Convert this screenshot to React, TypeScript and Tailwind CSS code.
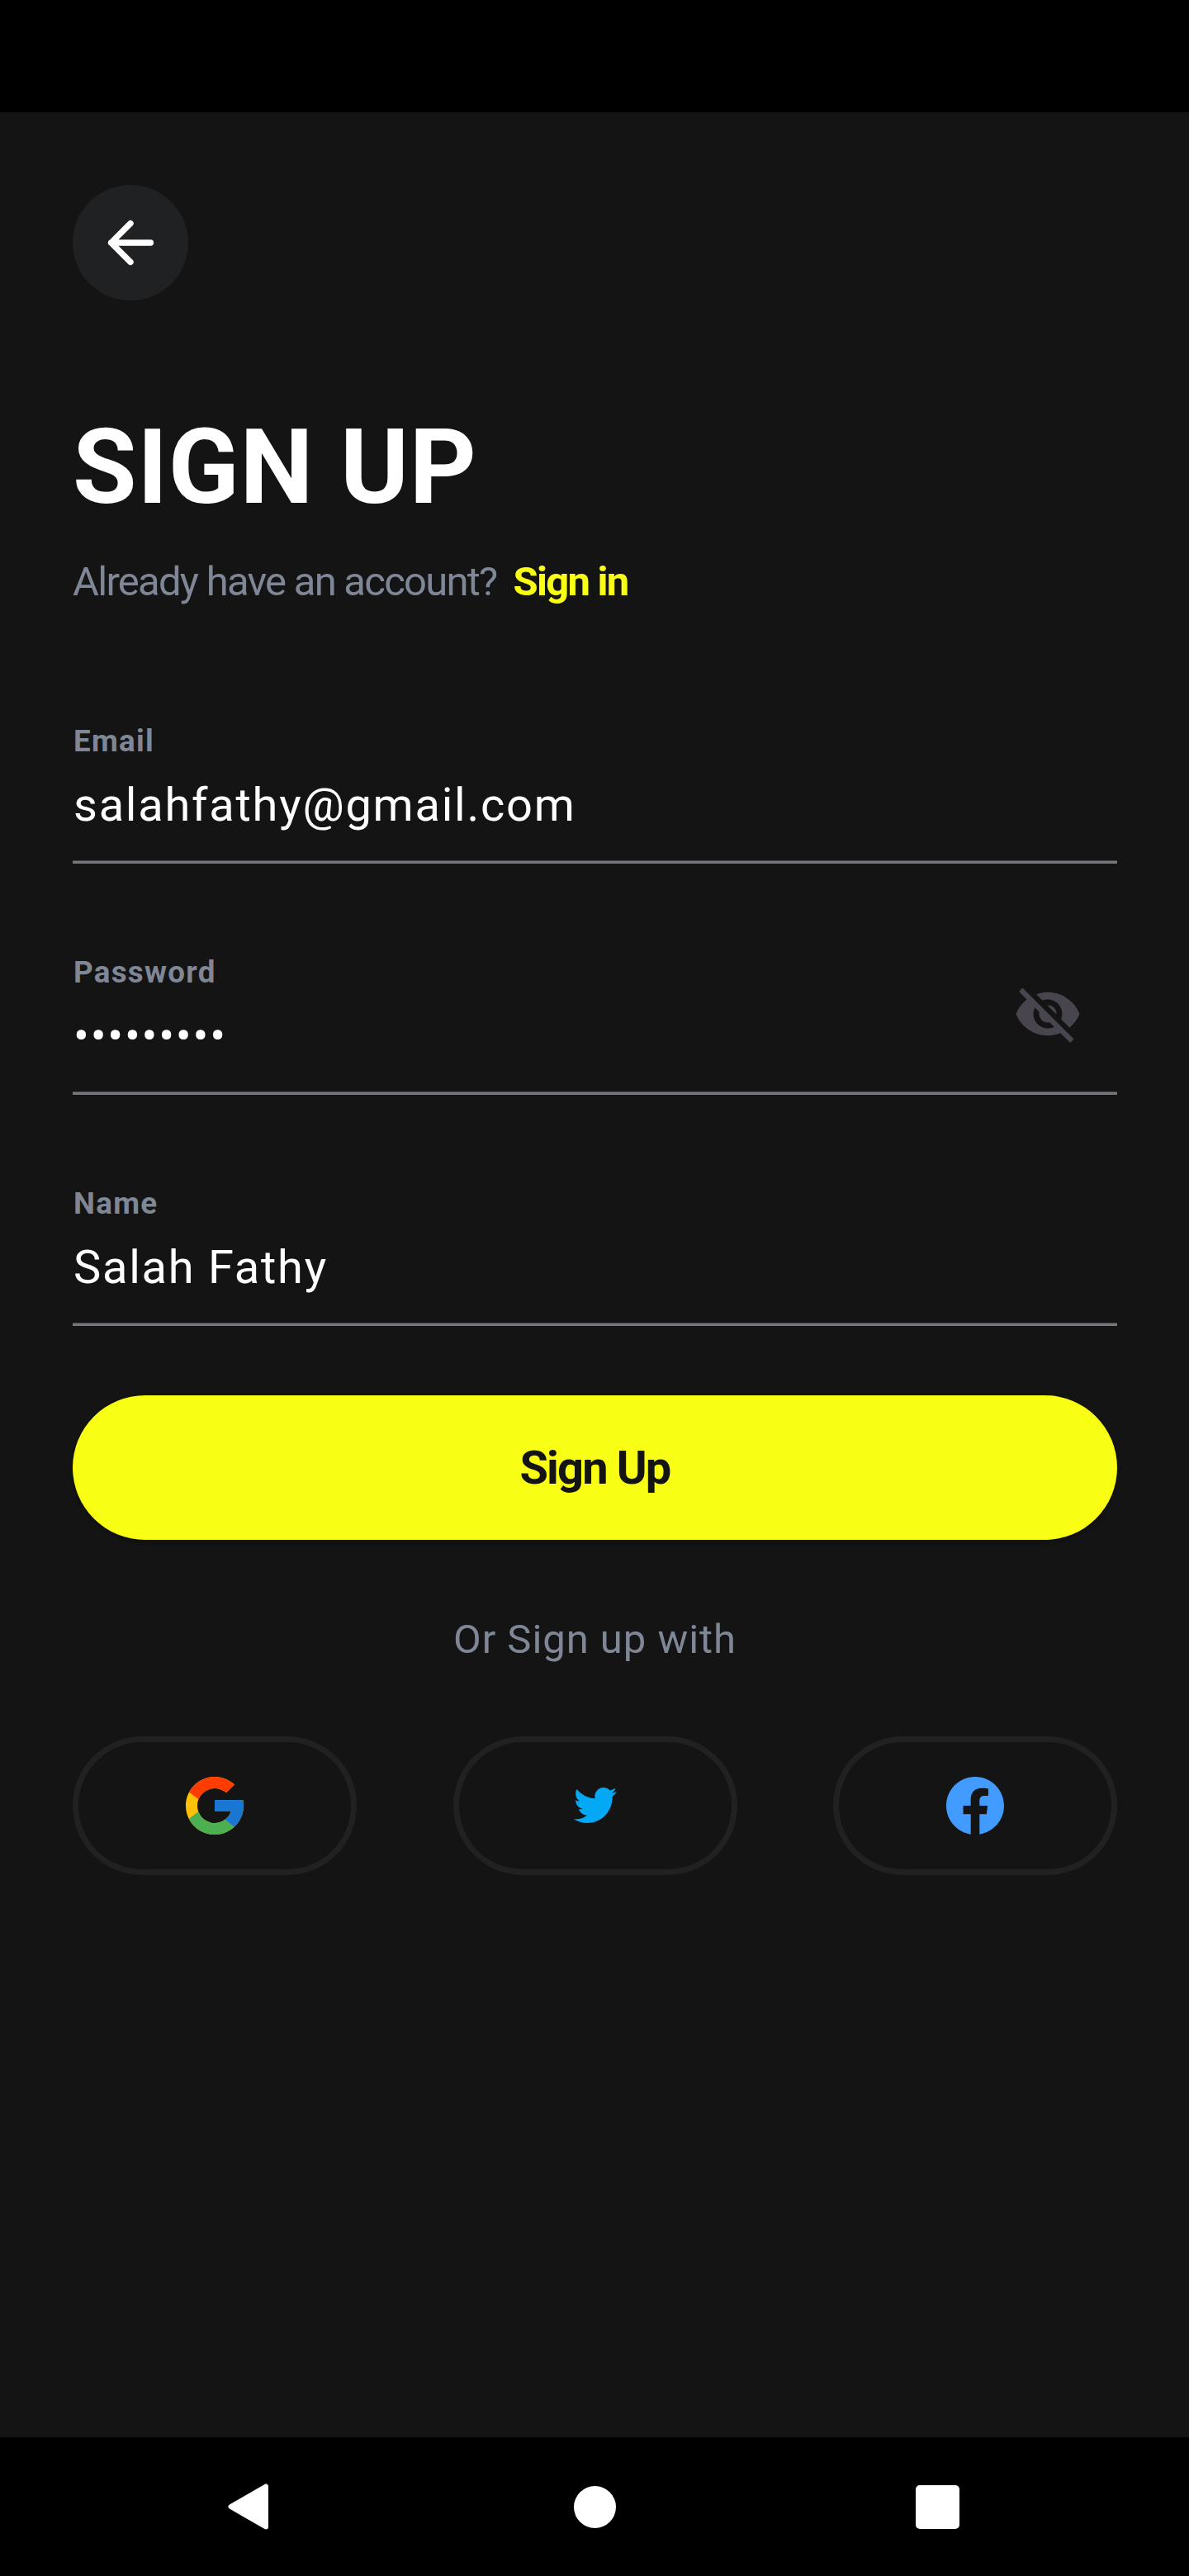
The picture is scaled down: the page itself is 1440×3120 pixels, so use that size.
import type { ReactNode } from 'react';
import { FcGoogle } from 'react-icons/fc';

function BackArrow() {
  return (
    <svg width="60" height="60" viewBox="0 0 60 60" fill="none" stroke="#fff" strokeWidth="7.4" strokeLinecap="round" strokeLinejoin="round">
      <path d="M30 6.6 6.6 30 30 53.4M6.6 30H54.4" />
    </svg>
  );
}

function EyeOff() {
  return (
    <svg width="84" height="84" viewBox="0 0 24 24" fill="#49454F">
      <path d="M12 7c2.76 0 5 2.24 5 5 0 .65-.13 1.26-.36 1.83l2.92 2.92c1.51-1.26 2.7-2.89 3.43-4.75-1.73-4.39-6-7.5-11-7.5-1.4 0-2.74.25-3.98.7l2.16 2.16C10.74 7.13 11.35 7 12 7zM2 4.27l2.28 2.28.46.46C3.08 8.3 1.78 10.02 1 12c1.73 4.39 6 7.5 11 7.5 1.55 0 3.03-.3 4.38-.84l.42.42L19.73 22 21 20.73 3.27 3 2 4.27zM7.53 9.8l1.55 1.55c-.05.21-.08.43-.08.65 0 1.66 1.34 3 3 3 .22 0 .44-.03.65-.08l1.55 1.55c-.67.33-1.41.53-2.2.53-2.76 0-5-2.24-5-5 0-.79.2-1.53.53-2.2zm4.31-.78 3.15 3.15.02-.16c0-1.66-1.34-3-3-3l-.17.01z" />
    </svg>
  );
}

function TwitterBird() {
  return (
    <svg className="mb-px ml-px" width="52" height="43" viewBox="6 9 36 29" preserveAspectRatio="none" fill="#03A9F4">
      <path d="M42 12.429c-1.323.586-2.746.977-4.247 1.162 1.526-.906 2.7-2.351 3.251-4.058-1.428.837-3.01 1.452-4.693 1.776C34.967 9.884 33.05 9 30.926 9c-4.08 0-7.387 3.278-7.387 7.32 0 .572.067 1.129.193 1.67-6.138-.308-11.582-3.226-15.224-7.654-.64 1.082-1 2.349-1 3.686 0 2.541 1.301 4.778 3.285 6.096-1.211-.037-2.351-.374-3.349-.914v.086c0 3.551 2.547 6.508 5.923 7.181-.617.169-1.269.263-1.941.263-.477 0-.942-.054-1.392-.135.94 2.902 3.667 5.023 6.898 5.086-2.528 1.96-5.712 3.134-9.174 3.134-.598 0-1.183-.034-1.761-.104C9.268 36.786 13.152 38 17.321 38c13.585 0 21.017-11.156 21.017-20.834 0-.317-.01-.633-.025-.945C39.763 15.197 41.013 13.905 42 12.429" />
    </svg>
  );
}

function FacebookMark() {
  return (
    <svg width="84" height="84" viewBox="0 0 24 24" fill="#429CFF">
      <path d="M22 12C22 6.48 17.52 2 12 2S2 6.48 2 12c0 5 3.66 9.13 8.48 9.9V14.95H7.85V12h2.63V9.8c0-2.5 1.49-3.86 3.77-3.86 1.09 0 2.3.16 2.3.16v2.44h-1.32c-1.24 0-1.71.77-1.71 1.56V12h2.8l-.36 2.95h-2.44v6.95C18.34 21.13 22 17 22 12z" />
    </svg>
  );
}

function Field({ label, value, trailing }: { label: string; value: string; trailing?: ReactNode }) {
  return (
    <div className="flex h-[170px] flex-col justify-between">
      <div className="flex h-[132px] items-start justify-between">
        <div className="flex flex-col gap-[22px] pl-px">
          <label className="text-[36.75px] leading-[44px] font-bold tracking-[1.28px] text-[#7F8797]">{label}</label>
          <span className="text-[56px] leading-[66px] tracking-[1.75px] whitespace-nowrap text-white">{value}</span>
        </div>
        {trailing && <div className="mt-[30px] mr-[42px]">{trailing}</div>}
      </div>
      <div className="h-1 border-t border-[#49464C] bg-[#79747E]" />
    </div>
  );
}

function SocialButton({ label, children }: { label: string; children: ReactNode }) {
  return (
    <button aria-label={label} className="flex h-[168px] w-[344px] items-center justify-center rounded-full border-[7px] border-[#202123]">
      {children}
    </button>
  );
}

export default function App() {
  return (
    <div className="flex h-[3120px] w-[1440px] flex-col bg-[#141414] font-['Roboto',sans-serif]">
      <div className="h-[136px] bg-black" />

      <main className="flex flex-1 flex-col pt-[88px] pr-[87px] pl-[88px]">
        <button aria-label="Back" className="flex size-[140px] items-center justify-center rounded-full bg-[#202123]">
          <BackArrow />
        </button>

        <h1 className="mt-32 text-[126px] leading-[148px] font-bold tracking-[0.7px] text-white">SIGN UP</h1>

        <p className="mt-[36px] flex gap-5 text-[49px] leading-[58px] tracking-[-1.75px]">
          <span className="text-[#7F8797]">Already have an account?</span>
          <a className="font-bold text-[#F9FF14]">Sign in</a>
        </p>

        <form className="mt-[142px] flex flex-col gap-[110px]">
          <Field label="Email" value="salahfathy@gmail.com" />
          <Field label="Password" value="•••••••••" trailing={<EyeOff />} />
          <Field label="Name" value="Salah Fathy" />
        </form>

        <button className="mt-[84px] h-[175px] rounded-full bg-[#F9FF14] text-[56px] font-bold tracking-[-1.85px] text-[#141414] shadow-[0_3px_4px_rgba(0,0,0,0.25)]">
          Sign Up
        </button>

        <p className="mt-[92px] text-center text-[49px] leading-[58px] tracking-[0.95px] text-[#7F8797]">Or Sign up with</p>

        <div className="mt-[88px] flex justify-between">
          <SocialButton label="Google">
            <FcGoogle className="size-[84px]" />
          </SocialButton>
          <SocialButton label="Twitter">
            <TwitterBird />
          </SocialButton>
          <SocialButton label="Facebook">
            <FacebookMark />
          </SocialButton>
        </div>
      </main>

      <nav className="flex h-[168px] items-center justify-between bg-black pr-[278px] pl-[276px]">
        <svg width="49" height="56" viewBox="0 0 49 56" fill="#fff" stroke="#fff" strokeWidth="6" strokeLinejoin="round">
          <path d="M46 3.5v49L3.5 28z" />
        </svg>
        <div className="ml-[7px] size-[51px] rounded-full bg-white" />
        <div className="size-[53px] rounded-[5px] bg-white" />
      </nav>
    </div>
  );
}
